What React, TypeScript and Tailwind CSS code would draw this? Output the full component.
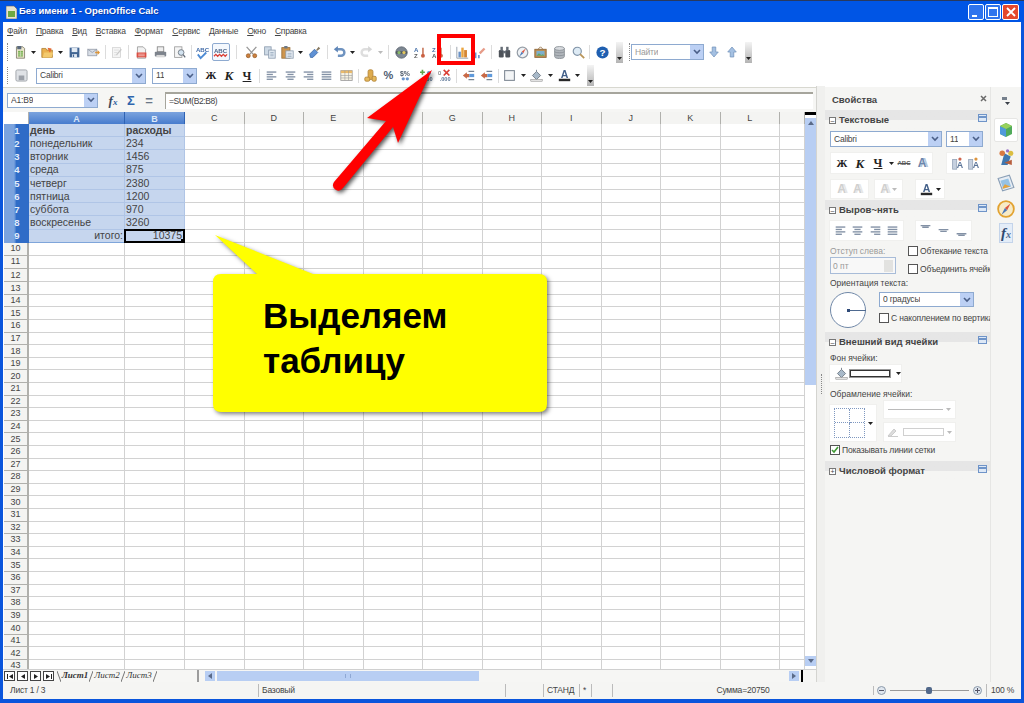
import type { ReactNode } from "react";

type Kids = { className?: string; children?: ReactNode };

const COLUMNS = ["C", "D", "E", "F", "G", "H", "I", "J", "K", "L"];
const ROW_COUNT = 43;
const TABLE = [
  ["день", "расходы"],
  ["понедельник", "234"],
  ["вторник", "1456"],
  ["среда", "875"],
  ["четверг", "2380"],
  ["пятница", "1200"],
  ["суббота", "970"],
  ["воскресенье", "3260"],
];
const MENU = [
  ["Ф", "айл"],
  ["П", "равка"],
  ["В", "ид"],
  ["В", "ставка"],
  ["Ф", "ормат"],
  ["С", "ервис"],
  ["Д", "анные"],
  ["О", "кно"],
  ["С", "правка"],
];
const GRID_COLS = "grid grid-cols-[25px_96px_60px_repeat(10,59.5px)_25px]";

function Slot({ className, children }: Kids) {
  return (
    <div className={`flex h-full shrink-0 items-center justify-center ${className ?? ""}`}>
      {children}
    </div>
  );
}

function Sep({ className }: Kids) {
  return (
    <div className={`flex h-full shrink-0 items-center justify-center ${className ?? ""}`}>
      <div className="h-[14px] w-px bg-[#dcdcdc]" />
    </div>
  );
}

function Caret({ muted }: { muted?: boolean }) {
  return (
    <svg width="5" height="3" viewBox="0 0 5 3">
      <path d="M0 0h5L2.5 3z" fill={muted ? "#bbbbbb" : "#222222"} />
    </svg>
  );
}

function Grip() {
  return (
    <div className="flex h-full w-[8px] shrink-0 justify-center py-[3px]">
      <div className="h-full w-px border-l border-dotted border-[#8a8a8a]" />
    </div>
  );
}

function ToolEnd({ className }: Kids) {
  return (
    <div
      className={`flex h-[21px] w-[7px] shrink-0 items-end justify-center bg-gradient-to-b from-[#f4f4f4] to-[#b4b4b4] pb-[3px] ${className ?? ""}`}
    >
      <Caret />
    </div>
  );
}

function Combo({ text, className, muted }: Kids & { text: string; muted?: boolean }) {
  return (
    <div
      className={`flex shrink-0 items-center justify-between border border-[#8eaad0] bg-white pl-[3px] text-[8.5px] tracking-[-0.2px] ${muted ? "text-[#9a9a9a]" : "text-[#444]"} ${className ?? ""}`}
    >
      <span className="truncate">{text}</span>
      <span className="flex h-full w-[13px] items-center justify-center bg-[#bcd0f4]">
        <svg width="8" height="6" viewBox="0 0 8 6">
          <path d="M1 1l3 3 3-3" fill="none" stroke="#4a5f88" strokeWidth="1.6" />
        </svg>
      </span>
    </div>
  );
}

function Ico({ children, size = 13 }: { children: ReactNode; size?: number }) {
  return (
    <svg width={size} height={size} viewBox="0 0 16 16" className="shrink-0 opacity-90">
      {children}
    </svg>
  );
}

const NewDoc = () => (
  <Ico>
    <path d="M3 1h8l2 2v12H3z" fill="#e9e4c8" stroke="#6d6a55" />
    <rect x="5" y="6" width="6" height="7" fill="#6ea842" />
    <path d="M5 8.5h6M5 11h6M8 6v7" stroke="#dbe8c8" strokeWidth=".7" />
    <rect x="4" y="0" width="5" height="4" fill="#4a5a70" />
  </Ico>
);
const OpenIco = () => (
  <Ico>
    <path d="M1 3h5l1 2h7v9H1z" fill="#e8a93c" stroke="#a87420" />
    <path d="M8 2l5 1-2 6z" fill="#e25a20" />
    <path d="M2 14l2-6h11l-2 6z" fill="#f2c560" />
  </Ico>
);
const SaveIco = () => (
  <Ico>
    <path d="M2 2h12v12H2z" fill="#2d5588" />
    <rect x="4.5" y="2.5" width="7" height="5" fill="#dfe8f2" />
    <rect x="5" y="10" width="6" height="4" fill="#dfe8f2" />
    <rect x="6" y="10.5" width="1.5" height="3" fill="#2d5588" />
  </Ico>
);
const MailIco = () => (
  <Ico>
    <rect x="1" y="4" width="11" height="8" fill="#d5dbe4" stroke="#8a93a2" />
    <path d="M1 4l5.5 4L12 4" fill="none" stroke="#8a93a2" />
    <path d="M10 7h3V5l3 3-3 3V9h-3z" fill="#d98a24" />
  </Ico>
);
const EditIco = () => (
  <Ico>
    <rect x="3" y="2" width="10" height="12" fill="#f4f4f4" stroke="#cfcfcf" />
    <path d="M5 5h6M5 8h4M5 11h4" stroke="#d8d8d8" />
    <path d="M8 11l6-7" stroke="#c4c4c4" strokeWidth="1.5" />
  </Ico>
);
const PdfIco = () => (
  <Ico>
    <path d="M3 1h7l3 3v11H3z" fill="#f0f0f0" stroke="#8b8b8b" />
    <rect x="2" y="8" width="12" height="6" fill="#d83b2e" />
    <path d="M4 10h8M4 12h8" stroke="#f6c4bf" />
  </Ico>
);
const PrintIco = () => (
  <Ico>
    <rect x="4" y="1" width="8" height="6" fill="#eeeeee" stroke="#747474" />
    <rect x="1" y="7" width="14" height="6" rx="1" fill="#6f7680" />
    <rect x="3" y="11" width="10" height="3" fill="#d5d5d5" />
  </Ico>
);
const PreviewIco = () => (
  <Ico>
    <rect x="2" y="1" width="9" height="13" fill="#f4f4f4" stroke="#8f8f8f" />
    <circle cx="10" cy="8" r="3.5" fill="#cfe0ef" stroke="#525c68" />
    <path d="M12.5 10.5L15 14" stroke="#525c68" strokeWidth="1.6" />
  </Ico>
);
const SpellIco = () => (
  <Ico size={15}>
    <text x="1" y="7" fontSize="6.5" fontWeight="700" fill="#2c5b9f" fontFamily="Liberation Sans">
      ABC
    </text>
    <path d="M3 10l3 4 6-6" fill="none" stroke="#3b7fd0" strokeWidth="2" />
  </Ico>
);
const AutoSpellIco = () => (
  <Ico size={15}>
    <text x="1" y="8" fontSize="6.5" fontWeight="700" fill="#39547c" fontFamily="Liberation Sans">
      ABC
    </text>
    <path d="M1 12l2-2 2 2 2-2 2 2 2-2 2 2 2-2" fill="none" stroke="#d92b20" strokeWidth="1.4" />
  </Ico>
);
const CutIco = () => (
  <Ico>
    <path d="M2 1l8 9M14 1l-8 9" stroke="#8c8c8c" strokeWidth="1.6" />
    <circle cx="4" cy="12" r="2.4" fill="#c9742a" stroke="#8f4f17" />
    <circle cx="12" cy="12" r="2.4" fill="#c9742a" stroke="#8f4f17" />
  </Ico>
);
const CopyIco = () => (
  <Ico>
    <rect x="2" y="1" width="8" height="10" fill="#c9d6e4" stroke="#7f90a5" />
    <rect x="7" y="5" width="8" height="10" fill="#dde6ef" stroke="#7f90a5" />
    <path d="M9 8h4M9 10h4M9 12h4" stroke="#8ea1b6" />
  </Ico>
);
const PasteIco = () => (
  <Ico>
    <rect x="1" y="2" width="10" height="13" fill="#c98a3a" stroke="#8b5d22" />
    <rect x="4" y="0" width="4" height="3" fill="#5e6a78" />
    <rect x="6" y="6" width="9" height="9" fill="#e6ecf3" stroke="#7f90a5" />
    <path d="M8 9h5M8 11h5M8 13h5" stroke="#8ea1b6" />
  </Ico>
);
const BrushIco = () => (
  <Ico>
    <path d="M2 10l6-6 4 4-6 6H3z" fill="#4e86d0" stroke="#2a5b9c" />
    <path d="M10 5l3-4 2 2-4 3z" fill="#7a6a4f" />
  </Ico>
);
const UndoIco = ({ flip, muted }: { flip?: boolean; muted?: boolean }) => (
  <svg
    width="13"
    height="13"
    viewBox="0 0 16 16"
    className={flip ? "-scale-x-100" : ""}
  >
    <path
      d="M5 4h5a4 4 0 0 1 0 8H6"
      fill="none"
      stroke={muted ? "#dedede" : "#6f93c0"}
      strokeWidth="3"
    />
    <path d="M6 0v8L1 4z" fill={muted ? "#d6d6d6" : "#5f86b8"} />
  </svg>
);
const NavIco = () => (
  <Ico>
    <circle cx="8" cy="8" r="7" fill="#6e7a86" stroke="#4f5862" />
    <path d="M1 8h14" stroke="#3e4650" strokeWidth="3" />
    <circle cx="5" cy="8" r="2" fill="#7fb55a" />
    <circle cx="11" cy="8" r="2" fill="#e2c34c" />
  </Ico>
);
const SortIco = ({ top, bottom }: { top: string; bottom: string }) => (
  <Ico>
    <text x="0" y="7" fontSize="7.5" fontWeight="700" fill="#2f5f9f" fontFamily="Liberation Sans">
      {top}
    </text>
    <text x="0" y="15" fontSize="7.5" fontWeight="700" fill="#4a4a4a" fontFamily="Liberation Sans">
      {bottom}
    </text>
    <path d="M11 2v8" stroke="#c26a4a" strokeWidth="2" />
    <circle cx="11" cy="12" r="2.4" fill="#c5502e" />
  </Ico>
);
const ChartIco = () => (
  <Ico>
    <path d="M1 1v14h14" fill="none" stroke="#7a8694" />
    <rect x="3" y="7" width="3" height="7" fill="#5a86c0" />
    <rect x="6.5" y="2" width="3" height="12" fill="#e89b2c" />
    <rect x="10" y="5" width="3.5" height="9" fill="#d07a1e" />
  </Ico>
);
const DrawIco = () => (
  <Ico>
    <path d="M2 15V8" stroke="#5a86c0" strokeWidth="2" />
    <path d="M6 15v-4" stroke="#5a86c0" strokeWidth="2" />
    <path d="M6 8l6-6 2 2-6 6z" fill="#e4917c" />
  </Ico>
);
const BinocIco = () => (
  <Ico>
    <rect x="1" y="5" width="6" height="9" rx="1.5" fill="#3a4048" />
    <rect x="9" y="5" width="6" height="9" rx="1.5" fill="#3a4048" />
    <rect x="3" y="1" width="3" height="5" fill="#565e68" />
    <rect x="10" y="1" width="3" height="5" fill="#565e68" />
    <rect x="6" y="6" width="4" height="3" fill="#565e68" />
  </Ico>
);
const CompassIco = () => (
  <Ico>
    <circle cx="8" cy="8" r="6.5" fill="#eef1f4" stroke="#8b949e" strokeWidth="1.5" />
    <path d="M12 3L7 7l2 2z" fill="#d8442e" />
    <path d="M4 13l3-6 2 2z" fill="#3b6cb0" />
  </Ico>
);
const GalleryIco = () => (
  <Ico>
    <rect x="1" y="4" width="14" height="10" fill="#b87f3a" stroke="#7c5220" />
    <rect x="3" y="6" width="10" height="6" fill="#6fa7c8" />
    <path d="M3 12l3-3 3 2 2-1 2 2z" fill="#5f9a42" />
    <path d="M5 4l3-3 3 3" fill="none" stroke="#7c5220" />
  </Ico>
);
const DbIco = () => (
  <Ico>
    <path d="M2 3v10c0 1.5 2.7 2.5 6 2.5s6-1 6-2.5V3z" fill="#a8aeb4" stroke="#7a8087" />
    <ellipse cx="8" cy="3" rx="6" ry="2.4" fill="#d4d8dc" stroke="#7a8087" />
    <path d="M2 7c1 1.8 11 1.8 12 0M2 10.5c1 1.8 11 1.8 12 0" fill="none" stroke="#7a8087" />
  </Ico>
);
const ZoomIco = () => (
  <Ico>
    <circle cx="6.5" cy="6.5" r="5" fill="#dbe9f5" stroke="#73889e" strokeWidth="1.4" />
    <path d="M10 10l5 5" stroke="#b28a48" strokeWidth="2.2" />
  </Ico>
);
const HelpIco = () => (
  <svg width="13" height="13" viewBox="0 0 16 16">
    <circle cx="8" cy="8" r="7.5" fill="#1f5fb0" />
    <text x="8" y="12.2" textAnchor="middle" fontSize="12" fontWeight="700" fill="#fff" fontFamily="Liberation Sans">
      ?
    </text>
  </svg>
);
const NavArrow = ({ up }: { up?: boolean }) => (
  <svg width="10" height="12" viewBox="0 0 14 16" className={up ? "" : "rotate-180"}>
    <path d="M7 1l6 7H9.5v7h-5V8H1z" fill="#a4c0e2" stroke="#6f90b8" />
  </svg>
);
const AlignIco = ({ kind }: { kind: "l" | "c" | "r" | "j" }) => {
  const short = kind === "j" ? 14 : 9;
  const x = kind === "l" || kind === "j" ? 1 : kind === "c" ? 3.5 : 6;
  return (
    <Ico size={11}>
      <path d="M1 3h14" stroke="#76869c" strokeWidth="2" />
      <path d={`M${x} 6.5h${short}`} stroke="#76869c" strokeWidth="2" />
      <path d="M1 10h14" stroke="#76869c" strokeWidth="2" />
      <path d={`M${x} 13.5h${short}`} stroke="#76869c" strokeWidth="2" />
    </Ico>
  );
};
const TableIco = () => (
  <Ico>
    <rect x="1" y="2" width="14" height="12" fill="#f6f2e2" stroke="#8d8d8d" />
    <rect x="1" y="2" width="14" height="3" fill="#e8b35c" />
    <path d="M1 8h14M1 11h14M6 2v12M10.5 2v12" stroke="#8d8d8d" strokeWidth=".7" />
  </Ico>
);
const CoinsIco = () => (
  <Ico>
    <rect x="5" y="1" width="6" height="12" rx="2" fill="#dba33a" stroke="#a87420" />
    <rect x="1" y="10" width="6" height="5" rx="1.5" fill="#e3b24c" stroke="#a87420" />
    <rect x="10" y="9" width="5" height="6" rx="1.5" fill="#e3b24c" stroke="#a87420" />
  </Ico>
);
const Glyph = ({ text, className }: { text: string; className: string }) => (
  <span className={`font-['Liberation_Serif',serif] leading-none ${className}`}>{text}</span>
);
const PercentIco = () => <span className="text-[11px] font-bold leading-none text-[#4c5b70]">%</span>;
const CurrencyIco = () => (
  <Ico>
    <text x="0" y="8" fontSize="8.5" fontWeight="700" fill="#3c4a5c" fontFamily="Liberation Sans">
      $%
    </text>
    <circle cx="4" cy="12" r="2" fill="#5b8bc8" />
    <circle cx="9" cy="12" r="2" fill="#5b8bc8" />
  </Ico>
);
const DecimalIco = ({ remove }: { remove?: boolean }) => (
  <Ico>
    {remove ? (
      <>
        <text x="0" y="7" fontSize="7" fill="#444" fontFamily="Liberation Sans">0</text>
        <path d="M7 1l7 7M14 1L7 8" stroke="#d82b20" strokeWidth="2" />
      </>
    ) : (
      <>
        <path d="M3 1v6M0 4h6" stroke="#4f9a38" strokeWidth="2" />
        <circle cx="11" cy="5" r="2.5" fill="#5b8bc8" />
      </>
    )}
    <text x="2" y="15" fontSize="7" fontWeight="700" fill="#4f6a8c" fontFamily="Liberation Sans">.000</text>
  </Ico>
);
const IndentIco = () => (
  <Ico>
    <path d="M1 8l5-4v2h3v4H6v2z" fill="#c45a34" />
    <path d="M8 3h7M8 13h7" stroke="#6a7788" strokeWidth="1.4" />
    <rect x="9" y="6" width="6" height="4" fill="#4d8fd8" />
  </Ico>
);
const BorderIco = () => (
  <Ico>
    <rect x="2" y="2" width="12" height="12" fill="#f2f4f6" stroke="#717c88" strokeWidth="1.3" />
  </Ico>
);
const BucketIco = () => (
  <Ico>
    <path d="M3 8l5-5 5 5-5 5z" fill="#9fb2c4" stroke="#55616e" />
    <path d="M8 3V1" stroke="#55616e" />
    <rect x="1" y="13" width="14" height="2" fill="#e8e8e8" stroke="#6c6c6c" strokeWidth=".6" />
  </Ico>
);
const FontColorIco = () => (
  <Ico>
    <text x="8" y="11" textAnchor="middle" fontSize="13" fontWeight="700" fill="#2e4e7c" fontFamily="Liberation Sans">
      A
    </text>
    <rect x="1" y="12" width="14" height="3" fill="#111" />
  </Ico>
);
const ShadowA = ({ muted }: { muted?: boolean }) => (
  <span
    className={
      muted
        ? "text-[12px] font-bold leading-none text-[#cfcfcf] [text-shadow:2px_0_0_#e6e6e6]"
        : "text-[12px] font-bold leading-none text-[#6a86ac] [text-shadow:2px_0_0_#b5c4d8]"
    }
  >
    A
  </span>
);
const SpacingIco = ({ tip }: { tip: string }) => (
  <Ico>
    <rect x="2" y="3" width="5" height="12" fill="#c0ccdc" stroke="#8a9ab0" />
    <text x="11" y="14" textAnchor="middle" fontSize="11" fontWeight="700" fill="#49648c" fontFamily="Liberation Sans">
      A
    </text>
    <circle cx="11" cy="2.5" r="2" fill={tip} />
  </Ico>
);
const CubeTab = () => (
  <Ico size={16}>
    <path d="M8 1l6 3v8l-6 3-6-3V4z" fill="#3fa24a" />
    <path d="M2 4l6 3v8l-6-3z" fill="#3c8fd8" />
    <path d="M8 1l6 3-6 3-6-3z" fill="#8ccd4c" />
  </Ico>
);
const StylesTab = () => (
  <Ico size={17}>
    <path d="M3 15l3-11 6 3-3 8z" fill="#2c6aa8" />
    <circle cx="4" cy="4" r="2.6" fill="#d56c2f" />
    <circle cx="12" cy="4" r="2.4" fill="#d9b92e" />
    <path d="M6 13l7 2v-5z" fill="#b14f2a" />
    <circle cx="9" cy="1.8" r="1.6" fill="#9164c2" />
  </Ico>
);
const GalleryTab = () => (
  <Ico size={18}>
    <path d="M1 4l10-3 4 11-10 3z" fill="#e6edf5" stroke="#7f96b0" />
    <path d="M3 6l7-2 2.5 7-7 2z" fill="#8cbde4" />
    <path d="M5 12l2-3 2 1 3 1-7 2z" fill="#e49b2c" />
  </Ico>
);
const CompassTab = () => (
  <Ico size={18}>
    <circle cx="8" cy="8" r="7" fill="#f8e9c2" stroke="#e09a1c" strokeWidth="1.6" />
    <path d="M12 3L7 7l2 2z" fill="#d8442e" />
    <path d="M4 13l3-6 2 2z" fill="#3b6cb0" />
  </Ico>
);

function TitleBar() {
  return (
    <div className="flex h-[22px] shrink-0 items-center border-t border-[#28395f] bg-[#0055e5] pl-[6px] pr-[5px]">
      <svg width="11" height="14" viewBox="0 0 11 14" className="mr-[2px]">
        <path d="M0 1h8l3 3v10H0z" fill="#e8e4cf" stroke="#556" strokeWidth=".6" />
        <rect x="2" y="6" width="7" height="6" fill="#6ea842" />
      </svg>
      <span className="text-[9.5px] font-bold text-white [text-shadow:1px_1px_0_#0a3aa8]">
        Без имени 1 - OpenOffice Calc
      </span>
      <div className="ml-auto flex gap-[1px]">
        <div className="flex h-[16px] w-[16px] items-end rounded-[2px] border border-white bg-[#2f74ee] pb-[2px] pl-[3px]">
          <div className="h-[2px] w-[5px] bg-white" />
        </div>
        <div className="flex h-[16px] w-[16px] items-center justify-center rounded-[2px] border border-white bg-[#2f74ee]">
          <div className="h-[10px] w-[10px] border border-t-2 border-white" />
        </div>
        <div className="flex h-[16px] w-[17px] items-center justify-center rounded-[2px] border border-white bg-[#e5482c]">
          <svg width="10" height="10" viewBox="0 0 10 10">
            <path d="M1 1l8 8M9 1L1 9" stroke="#fff" strokeWidth="1.8" />
          </svg>
        </div>
      </div>
    </div>
  );
}

function MenuBar() {
  return (
    <div className="flex h-[18px] shrink-0 items-center gap-[9px] bg-white pl-[4px] text-[8.5px] text-[#444]">
      {MENU.map(([first, rest], index) => (
        <span key={index} className="tracking-[-0.25px]">
          <span className="underline">{first}</span>
          {rest}
        </span>
      ))}
    </div>
  );
}

function MainToolbar() {
  return (
    <div className="flex h-[24px] shrink-0 items-center bg-white">
      <Grip />
      <Slot className="w-[18px]"><NewDoc /></Slot>
      <Slot className="w-[9px]"><Caret /></Slot>
      <Slot className="w-[18px]"><OpenIco /></Slot>
      <Slot className="w-[9px]"><Caret /></Slot>
      <Slot className="w-[18px]"><SaveIco /></Slot>
      <Slot className="w-[20px]"><MailIco /></Slot>
      <Sep className="w-[5px]" />
      <Slot className="w-[17px]"><EditIco /></Slot>
      <Sep className="w-[7px]" />
      <Slot className="w-[19px]"><PdfIco /></Slot>
      <Slot className="w-[18px]"><PrintIco /></Slot>
      <Slot className="w-[20px]"><PreviewIco /></Slot>
      <Sep className="w-[5px]" />
      <Slot className="w-[17px]"><SpellIco /></Slot>
      <Slot className="w-[19px]">
        <div className="flex h-[18px] w-[18px] items-center justify-center rounded-[2px] border border-[#8eaad0] bg-[#f4f8fd]">
          <AutoSpellIco />
        </div>
      </Slot>
      <Sep className="w-[13px]" />
      <Slot className="w-[16px]"><CutIco /></Slot>
      <Slot className="w-[20px]"><CopyIco /></Slot>
      <Slot className="w-[17px]"><PasteIco /></Slot>
      <Slot className="w-[9px]"><Caret /></Slot>
      <Slot className="w-[18px]"><BrushIco /></Slot>
      <Sep className="w-[9px]" />
      <Slot className="w-[14px]"><UndoIco /></Slot>
      <Slot className="w-[12px]"><Caret /></Slot>
      <Slot className="w-[16px]"><UndoIco flip muted /></Slot>
      <Slot className="w-[12px]"><Caret muted /></Slot>
      <Sep className="w-[5px]" />
      <Slot className="w-[20px]"><NavIco /></Slot>
      <Slot className="w-[18px]"><SortIco top="A" bottom="Z" /></Slot>
      <Slot className="w-[18px]"><SortIco top="Z" bottom="A" /></Slot>
      <Sep className="w-[6px]" />
      <Slot className="w-[18px]"><ChartIco /></Slot>
      <Slot className="w-[19px]"><DrawIco /></Slot>
      <Sep className="w-[3px]" />
      <Slot className="w-[22px]"><BinocIco /></Slot>
      <Slot className="w-[15px]"><CompassIco /></Slot>
      <Slot className="w-[20px]"><GalleryIco /></Slot>
      <Slot className="w-[18px]"><DbIco /></Slot>
      <Slot className="w-[20px]"><ZoomIco /></Slot>
      <Sep className="w-[3px]" />
      <Slot className="w-[22px]"><HelpIco /></Slot>
      <ToolEnd className="ml-[3px]" />
      <div className="ml-[3px] flex h-full w-[7px] shrink-0 justify-center py-[3px]">
        <div className="h-full border-l border-dotted border-[#8a8a8a]" />
      </div>
      <Combo text="Найти" muted className="ml-[-2px] h-[16px] w-[73px]" />
      <Slot className="ml-[1px] w-[18px]"><NavArrow /></Slot>
      <Slot className="w-[18px]"><NavArrow up /></Slot>
      <ToolEnd className="ml-[4px]" />
    </div>
  );
}

function FormatToolbar() {
  return (
    <div className="flex h-[23px] shrink-0 items-center bg-white">
      <Grip />
      <Slot className="w-[20px]">
        <svg width="13" height="13" viewBox="0 0 14 14">
          <rect x="1" y="1" width="12" height="12" rx="1.5" fill="#dfe2e6" stroke="#a0a4aa" />
          <rect x="4" y="7" width="6" height="5" fill="#9ba0a8" />
        </svg>
      </Slot>
      <Combo text="Calibri" className="ml-[5px] h-[16px] w-[110px]" />
      <Combo text="11" className="ml-[6px] h-[16px] w-[45px]" />
      <Slot className="ml-[5px] w-[18px]"><Glyph text="Ж" className="text-[11px] font-bold text-[#222]" /></Slot>
      <Slot className="w-[18px]"><Glyph text="К" className="text-[13px] font-bold italic text-[#222]" /></Slot>
      <Slot className="w-[18px]"><Glyph text="Ч" className="text-[12px] font-bold text-[#222] underline" /></Slot>
      <Sep className="w-[6px]" />
      <Slot className="w-[19px]"><AlignIco kind="l" /></Slot>
      <Slot className="w-[18px]"><AlignIco kind="c" /></Slot>
      <Slot className="w-[18px]"><AlignIco kind="r" /></Slot>
      <Slot className="w-[19px]"><AlignIco kind="j" /></Slot>
      <Slot className="w-[20px]"><TableIco /></Slot>
      <Sep className="w-[4px]" />
      <Slot className="w-[20px]"><CoinsIco /></Slot>
      <Slot className="w-[17px]"><PercentIco /></Slot>
      <Slot className="w-[19px]"><CurrencyIco /></Slot>
      <Slot className="w-[20px]"><DecimalIco /></Slot>
      <Slot className="w-[16px]"><DecimalIco remove /></Slot>
      <Sep className="w-[8px]" />
      <Slot className="w-[17px]"><IndentIco /></Slot>
      <Slot className="w-[19px]"><IndentIco /></Slot>
      <Sep className="w-[4px]" />
      <Slot className="w-[19px]"><BorderIco /></Slot>
      <Slot className="w-[8px]"><Caret /></Slot>
      <Slot className="w-[19px]"><BucketIco /></Slot>
      <Slot className="w-[9px]"><Caret /></Slot>
      <Slot className="w-[18px]"><FontColorIco /></Slot>
      <Slot className="w-[9px]"><Caret /></Slot>
      <ToolEnd className="ml-[5px]" />
    </div>
  );
}

function FormulaBar() {
  return (
    <div className="flex h-[25px] shrink-0 items-center border-t border-[#d8d8d0] bg-[#f6f6f4] pl-[4px]">
      <Combo text="A1:B9" className="h-[15px] w-[91px]" />
      <Slot className="ml-[6px] w-[18px]">
        <span className="font-['Liberation_Serif',serif] text-[13px] font-bold italic leading-none text-[#3a4a60]">
          f<span className="text-[9px] text-[#2f5f9f]">x</span>
        </span>
      </Slot>
      <Slot className="w-[18px]">
        <span className="text-[13px] font-bold leading-none text-[#2f65ad]">Σ</span>
      </Slot>
      <Slot className="w-[18px]">
        <span className="text-[13px] font-bold leading-none text-[#6a7788]">=</span>
      </Slot>
      <div className="ml-[7px] flex h-[17px] flex-1 items-center border-t-2 border-l border-t-[#a6a59c] border-l-[#a6a59c] bg-white pl-[3px] text-[8.5px] tracking-[-0.4px] text-[#444]">
        =SUM(B2:B8)
      </div>
      <div className="w-[3px]" />
    </div>
  );
}

function HeaderCell({ label, selected }: { label: string; selected?: boolean }) {
  return (
    <div
      className={
        selected
          ? "flex items-center justify-center border-r border-[#2f63b4] bg-gradient-to-b from-[#7ba3de] to-[#3a72c9] text-[9px] font-bold text-[#dce8f8]"
          : "flex items-center justify-center border-r border-b border-[#b0b0ac] bg-[#f4f4f2] text-[9px] text-[#444]"
      }
    >
      {label}
    </div>
  );
}

function DataCell({ row, col }: { row: number; col: number }) {
  const inTable = row <= 9 && col <= 1;
  const value = row <= 8 && col <= 1 ? TABLE[row - 1][col] : "";
  const isHead = row === 1;
  if (inTable) {
    const isTotal = row === 9;
    return (
      <div
        className={`relative flex items-center bg-[#c6d6ee] px-[1px] text-[10.5px] leading-none text-[#444] ${
          row === 9 ? "border-b border-[#6a97d8]" : "border-b border-[#b0c5e6]"
        } ${col === 0 ? "border-r border-[#7fa5da]" : "border-r border-[#6a97d8]"} ${isHead ? "font-bold" : ""} ${isTotal ? "justify-end" : ""}`}
      >
        {isTotal && col === 0 ? "итого:" : value}
        {isTotal && col === 1 && (
          <div className="absolute -inset-[1px] flex items-center justify-end border-2 border-black pr-[1px]">
            10375
            <div className="absolute -right-[2px] -bottom-[2px] h-[4px] w-[4px] bg-black" />
          </div>
        )}
      </div>
    );
  }
  return <div className="border-r border-b border-[#d2d2d2] bg-white" />;
}

function Sheet() {
  const rows = Array.from({ length: ROW_COUNT }, (_, index) => index + 1);
  const cols = Array.from({ length: 13 }, (_, index) => index);
  return (
    <div className="flex min-h-0 flex-1 overflow-hidden">
      <div className="ml-[1px] flex-1 overflow-hidden">
        <div className={`${GRID_COLS} h-[12px]`}>
          <div className="border-r border-b border-[#b0b0ac] bg-white" />
          <HeaderCell label="A" selected />
          <HeaderCell label="B" selected />
          {COLUMNS.map((name) => (
            <HeaderCell key={name} label={name} />
          ))}
          <HeaderCell label="" />
        </div>
        {rows.map((row) => (
          <div
            key={row}
            className={`${GRID_COLS} ${row <= 12 ? "h-[13.2px]" : "h-[12.6px]"}`}
          >
            <div
              className={
                row <= 9
                  ? "flex items-center justify-center bg-gradient-to-r from-[#7ba3de] from-40% to-[#2f6cc7] to-50% pl-[1px] text-[9.5px] font-bold leading-none text-[#e4edfa]"
                  : "flex items-center justify-center border-r-2 border-b border-[#b0b0ac] bg-[#f4f4f2] text-[9px] leading-none text-[#444]"
              }
            >
              {row}
            </div>
            {cols.map((col) => (
              <DataCell key={col} row={row} col={col} />
            ))}
          </div>
        ))}
      </div>
      <div className="flex w-[11px] shrink-0 flex-col bg-white">
        <div className="h-[3px] bg-black" />
        <div className="mt-[3px] flex h-[10px] items-center justify-center bg-[#b8cef3]">
          <svg width="6" height="4" viewBox="0 0 6 4"><path d="M0 4h6L3 0z" fill="#5a6a88" /></svg>
        </div>
        <div className="h-[257px] bg-[#b8cef3]" />
        <div className="flex-1" />
        <div className="mb-[3px] flex h-[10px] items-center justify-center bg-[#b8cef3]">
          <svg width="6" height="4" viewBox="0 0 6 4"><path d="M0 0h6L3 4z" fill="#5a6a88" /></svg>
        </div>
      </div>
    </div>
  );
}

function NavBtn({ children }: Kids) {
  return (
    <div className="flex h-[10px] w-[11px] shrink-0 items-center justify-center border border-[#444] bg-white">
      {children}
    </div>
  );
}

function TabEdge({ back }: { back?: boolean }) {
  return (
    <svg width="4" height="11" viewBox="0 0 4 11" className="shrink-0">
      <path d={back ? "M0 0l4 11" : "M0 11l4-11"} stroke="#777" fill="none" />
    </svg>
  );
}

function SheetTabs() {
  return (
    <div className="flex h-[13px] shrink-0 items-center border-t border-[#d0d0d0] bg-[#f6f6f4] pl-[1px]">
      <div className="flex w-[52px] shrink-0 gap-[2px]">
        <NavBtn><svg width="6" height="5" viewBox="0 0 6 5"><path d="M0 0h1v5H0zM6 0v5L2 2.5z" fill="#222" /></svg></NavBtn>
        <NavBtn><svg width="4" height="5" viewBox="0 0 4 5"><path d="M4 0v5L0 2.5z" fill="#222" /></svg></NavBtn>
        <NavBtn><svg width="4" height="5" viewBox="0 0 4 5"><path d="M0 0v5l4-2.5z" fill="#222" /></svg></NavBtn>
        <NavBtn><svg width="6" height="5" viewBox="0 0 6 5"><path d="M5 0h1v5H5zM0 0v5l4-2.5z" fill="#222" /></svg></NavBtn>
      </div>
      <div className="flex h-full w-[143px] shrink-0 items-center border-r-2 border-[#9c9c9c] pl-[1px] font-['Liberation_Serif',serif] text-[9px] italic text-[#333]">
        <TabEdge back />
        <span className="w-[28px] shrink-0 border-b border-[#666] text-center font-bold">Лист1</span>
        <TabEdge />
        <span className="w-[28px] shrink-0 border-b border-[#999] text-center">Лист2</span>
        <TabEdge />
        <span className="w-[28px] shrink-0 border-b border-[#999] text-center">Лист3</span>
        <TabEdge />
      </div>
      <div className="ml-[6px] flex h-[10px] w-[10px] shrink-0 items-center justify-center bg-[#b8cef3]">
        <svg width="4" height="6" viewBox="0 0 4 6"><path d="M4 0v6L0 3z" fill="#5a6a88" /></svg>
      </div>
      <div className="ml-[2px] flex h-[10px] w-[262px] shrink-0 items-center justify-center bg-[#b8cef3]">
        <div className="h-[4px] w-[6px] border-x border-[#8fa8d4]" />
      </div>
      <div className="flex-1" />
      <div className="flex h-[10px] w-[10px] shrink-0 items-center justify-center bg-[#b8cef3]">
        <svg width="4" height="6" viewBox="0 0 4 6"><path d="M0 0v6l4-3z" fill="#5a6a88" /></svg>
      </div>
      <div className="ml-[2px] mr-[13px] h-[12px] w-[2px] bg-black" />
    </div>
  );
}

function Section({ title, plus }: { title: string; plus?: boolean }) {
  return (
    <div className="flex h-[20px] shrink-0 items-center bg-gradient-to-b from-[#e6e6e6] from-50% to-[#f5f5f3] to-50% pl-[4px] pr-[3px] text-[9.5px] font-bold text-[#444]">
      <span className="mr-[3px] flex h-[7px] w-[7px] items-center justify-center border border-[#777] bg-white text-[7px] font-normal leading-none">
        {plus ? "+" : "–"}
      </span>
      <span>{title}</span>
      <span className="mb-[4px] ml-auto flex h-[8px] w-[9px] items-start border border-[#6f94c8] bg-[#dde8f6]">
        <span className="mt-[1px] h-[2px] w-full bg-[#6f94c8]" />
      </span>
    </div>
  );
}

function Group({ className, children }: Kids) {
  return (
    <div className={`flex shrink-0 items-center border border-[#f0f0ee] bg-white ${className ?? ""}`}>
      {children}
    </div>
  );
}

function CheckRow({ text, checked, className }: Kids & { text: string; checked?: boolean }) {
  return (
    <div className={`flex items-center overflow-hidden whitespace-nowrap text-[8.5px] tracking-[-0.15px] text-[#444] ${className ?? ""}`}>
      <span className="mr-[2px] flex h-[10px] w-[10px] shrink-0 items-center justify-center border border-[#555] bg-white">
        {checked && (
          <svg width="8" height="8" viewBox="0 0 8 8">
            <path d="M1 4l2 2 4-5" fill="none" stroke="#3f9a34" strokeWidth="1.6" />
          </svg>
        )}
      </span>
      {text}
    </div>
  );
}

function VAlignIco({ pos }: { pos: number }) {
  const y = [2, 7, 12][pos];
  return (
    <Ico size={13}>
      <path d={`M2 ${y}h12M4 ${y + 2}h8`} stroke="#76869c" strokeWidth="1.6" />
    </Ico>
  );
}

function SidebarPanel() {
  return (
    <div className="flex w-[166px] shrink-0 flex-col overflow-hidden border-r border-[#e6e6e4] bg-[#f5f5f3] pt-[3px]">
      <div className="flex h-[20px] shrink-0 items-center justify-between pl-[7px] pr-[3px] text-[9.5px] font-bold text-[#444]">
        Свойства
        <svg width="7" height="7" viewBox="0 0 7 7" className="mb-[4px]">
          <path d="M1 1l5 5M6 1L1 6" stroke="#6a6a6a" strokeWidth="1.5" />
        </svg>
      </div>
      <Section title="Текстовые" />
      <div className="mt-[1px] flex shrink-0 px-[5px]">
        <Combo text="Calibri" className="h-[16px] w-[112px]" />
        <Combo text="11" className="ml-[4px] h-[16px] w-[37px]" />
      </div>
      <div className="mt-[5px] flex h-[22px] shrink-0 px-[5px]">
        <Group className="h-full w-[103px] pl-[2px]">
          <Slot className="w-[18px]"><Glyph text="Ж" className="text-[11px] font-bold text-[#222]" /></Slot>
          <Slot className="w-[18px]"><Glyph text="К" className="text-[13px] font-bold italic text-[#222]" /></Slot>
          <Slot className="w-[18px]"><Glyph text="Ч" className="text-[12px] font-bold text-[#222] underline" /></Slot>
          <Slot className="w-[8px]"><Caret /></Slot>
          <Slot className="w-[18px]"><span className="text-[6px] font-bold text-[#555] line-through">ABC</span></Slot>
          <Slot className="w-[18px]"><ShadowA /></Slot>
        </Group>
        <Group className="ml-[13px] h-full w-[39px] justify-center gap-[3px]">
          <SpacingIco tip="#c9553a" />
          <SpacingIco tip="#d98a2c" />
        </Group>
      </div>
      <div className="mt-[5px] flex h-[20px] shrink-0 px-[5px]">
        <Group className="h-full w-[39px] justify-center gap-[7px]">
          <ShadowA muted />
          <ShadowA muted />
        </Group>
        <Group className="ml-[5px] h-full w-[29px] justify-center gap-[3px]">
          <ShadowA muted />
          <Caret muted />
        </Group>
        <Group className="ml-[12px] h-full w-[30px] justify-center gap-[3px]">
          <FontColorIco />
          <Caret />
        </Group>
      </div>
      <div className="mt-[1px]">
        <Section title="Выров~нять" />
      </div>
      <div className="flex h-[21px] shrink-0 pl-[4px]">
        <Group className="h-full w-[75px] justify-around px-[2px]">
          <AlignIco kind="l" />
          <AlignIco kind="c" />
          <AlignIco kind="r" />
          <AlignIco kind="j" />
        </Group>
        <Group className="ml-[11px] h-full w-[57px] justify-around">
          <VAlignIco pos={0} />
          <VAlignIco pos={1} />
          <VAlignIco pos={2} />
        </Group>
      </div>
      <div className="mt-[5px] flex h-[28px] shrink-0 pl-[5px]">
        <div className="w-[78px] shrink-0 text-[8.5px] leading-[10px] text-[#9a9a9a]">
          Отступ слева:
          <div className="mt-[1px] flex h-[17px] w-[66px] items-center justify-between border border-[#a8bcd8] bg-[#f8f8f8] pl-[2px] pr-[2px]">
            0 пт
            <span className="h-[12px] w-[9px] bg-[#e2e2e0]" />
          </div>
        </div>
        <div className="flex min-w-0 flex-1 flex-col gap-[8px]">
          <CheckRow text="Обтекание текста" />
          <CheckRow text="Объединить ячейки" />
        </div>
      </div>
      <div className="mt-[4px] h-[10px] shrink-0 pl-[5px] text-[8.5px] leading-[10px] text-[#444]">
        Ориентация текста:
      </div>
      <div className="mt-[4px] flex h-[36px] shrink-0 pl-[5px]">
        <div className="relative h-[36px] w-[36px] shrink-0 rounded-full border border-[#7088a8] bg-white">
          <div className="absolute left-[17px] top-[17px] h-px w-[18px] bg-[#4f6a90]" />
          <div className="absolute left-[16px] top-[16px] h-[3px] w-[3px] bg-[#2f4a78]" />
        </div>
        <div className="ml-[13px] flex min-w-0 flex-1 flex-col">
          <Combo text="0 градусы" className="h-[15px] w-[95px]" />
          <CheckRow text="С накоплением по вертикали" className="mt-[5px]" />
        </div>
      </div>
      <div className="mt-[4px]">
        <Section title="Внешний вид ячейки" />
      </div>
      <div className="mt-[1px] h-[10px] shrink-0 pl-[5px] text-[8.5px] leading-[10px] text-[#444]">
        Фон ячейки:
      </div>
      <Group className="ml-[4px] mt-[1px] h-[19px] w-[73px] gap-[2px] pl-[5px]">
        <BucketIco />
        <div className="h-[7px] w-[40px] border border-[#333] bg-white outline outline-1 outline-[#999]" />
        <div className="ml-[4px]"><Caret /></div>
      </Group>
      <div className="mt-[6px] h-[10px] shrink-0 pl-[5px] text-[8.5px] leading-[10px] text-[#444]">
        Обрамление ячейки:
      </div>
      <div className="mt-[1px] flex h-[42px] shrink-0 pl-[4px]">
        <Group className="mt-[4px] h-[38px] w-[48px] pl-[4px]">
          <div className="grid h-[30px] w-[31px] grid-cols-2 grid-rows-2 border border-dotted border-[#7f98c0]">
            <div className="border-r border-b border-dotted border-[#7f98c0]" />
            <div className="border-b border-dotted border-[#7f98c0]" />
            <div className="border-r border-dotted border-[#7f98c0]" />
            <div />
          </div>
          <div className="ml-[3px]"><Caret /></div>
        </Group>
        <div className="ml-[6px] flex w-[73px] flex-col gap-[3px]">
          <Group className="h-[19px] justify-between px-[4px]">
            <div className="h-px w-[55px] bg-[#bbb]" />
            <Caret muted />
          </Group>
          <Group className="h-[20px] justify-between px-[3px]">
            <svg width="12" height="10" viewBox="0 0 12 10"><path d="M1 9l6-7 2 2-5 5zM1 9.5h10" stroke="#ccc" fill="#ddd" /></svg>
            <div className="h-[8px] w-[41px] border border-[#d0d0d0]" />
            <Caret muted />
          </Group>
        </div>
      </div>
      <CheckRow text="Показывать линии сетки" checked className="mt-[3px] h-[10px] shrink-0 pl-[5px]" />
      <div className="mt-[6px]">
        <Section title="Числовой формат" plus />
      </div>
    </div>
  );
}

function DeckTabs() {
  return (
    <div className="flex w-[30px] shrink-0 flex-col items-center bg-[#f5f5f3] pt-[10px]">
      <svg width="8" height="8" viewBox="0 0 8 8" className="mb-[13px] mr-[1px]">
        <rect x="0" y="0" width="5" height="3" fill="#76808c" />
        <path d="M3 5h5L5.5 8z" fill="#3a4048" />
      </svg>
      <div className="flex h-[24px] w-[24px] items-center justify-center rounded-[2px] border border-[#e6e6e4] bg-white">
        <CubeTab />
      </div>
      <div className="mt-[5px] flex h-[20px] items-center"><StylesTab /></div>
      <div className="mt-[6px] flex h-[20px] items-center"><GalleryTab /></div>
      <div className="mt-[6px] flex h-[20px] items-center"><CompassTab /></div>
      <div className="mt-[4px] flex h-[20px] items-center border border-[#c4d4ea] bg-[#e4edf8] px-[1px]">
        <span className="font-['Liberation_Serif',serif] text-[15px] font-bold italic leading-none text-[#2f4a70]">
          f<span className="text-[10px] text-[#4f6a90]">x</span>
        </span>
      </div>
    </div>
  );
}

function StatusBar() {
  return (
    <div className="flex h-[17px] shrink-0 items-center bg-[#f5f5f3] text-[8.5px] tracking-[-0.2px] text-[#444]">
      <div className="w-[255px] shrink-0 pl-[7px]">Лист 1 / 3</div>
      <div className="w-[247px] shrink-0 border-l border-[#bbb] pl-[3px]">Базовый</div>
      <div className="h-[13px] w-[38px] shrink-0 border-l border-[#bbb]" />
      <div className="w-[36px] shrink-0 border-l border-[#bbb] pl-[3px]">СТАНД</div>
      <div className="w-[12px] shrink-0 border-l border-[#bbb] pl-[3px]">*</div>
      <div className="h-[13px] w-[21px] shrink-0 border-l border-[#bbb]" />
      <div className="w-[261px] shrink-0 border-l border-[#bbb] text-center">Сумма=20750</div>
      <div className="flex w-[113px] shrink-0 items-center border-l border-[#bbb] pl-[3px]">
        <span className="flex h-[9px] w-[9px] items-center justify-center rounded-full border border-[#8c9aaa] bg-[#dfe6ee]">
          <span className="h-px w-[5px] bg-[#556]" />
        </span>
        <div className="relative mx-[4px] h-px w-[79px] bg-[#999]">
          <div className="absolute left-[36px] -top-[3px] h-[7px] w-[6px] rounded-[2px] bg-[#51688a]" />
        </div>
        <span className="relative flex h-[9px] w-[9px] items-center justify-center rounded-full border border-[#8c9aaa] bg-[#dfe6ee]">
          <span className="h-px w-[5px] bg-[#556]" />
          <span className="absolute h-[5px] w-px bg-[#556]" />
        </span>
      </div>
      <div className="flex-1 border-l border-[#bbb] pl-[4px]">100 %</div>
    </div>
  );
}

function Annotations() {
  return (
    <>
      <div className="absolute left-[437px] top-[34px] h-[31px] w-[38px] border-[4px] border-[#ff0000]" />
      <svg
        width="120"
        height="135"
        viewBox="325 65 120 135"
        className="absolute left-[325px] top-[65px] drop-shadow-[2px_2px_2px_rgba(0,0,0,0.65)]"
      >
        <path
          d="M432 70L367 118L386 121L334 182Q331 187 336 190Q340 192 343 188L393 127L398 143Z"
          fill="#ff0000"
        />
      </svg>
      <svg
        width="345"
        height="185"
        viewBox="210 232 345 185"
        className="absolute left-[210px] top-[232px] drop-shadow-[2px_2px_2px_rgba(0,0,0,0.5)]"
      >
        <path
          d="M215 235L313 274H539Q547 274 547 282V404Q547 412 539 412H221Q213 412 213 404V282Q213 274 221 274H257Z"
          fill="#ffff00"
        />
      </svg>
      <div className="absolute left-[263px] top-[293px] font-['Liberation_Sans',sans-serif] text-[35px] font-bold leading-[45px] text-black">
        Выделяем
        <br />
        таблицу
      </div>
    </>
  );
}

export default function App() {
  return (
    <div className="relative flex h-[703px] w-[1024px] flex-col overflow-hidden bg-[#0a55dc] font-['Liberation_Sans',sans-serif]">
      <TitleBar />
      <div className="mx-[3px] mb-[4px] flex min-h-0 flex-1 flex-col bg-white">
        <MenuBar />
        <MainToolbar />
        <FormatToolbar />
        <div className="flex min-h-0 flex-1">
          <div className="flex w-[813px] shrink-0 flex-col">
            <FormulaBar />
            <Sheet />
            <SheetTabs />
          </div>
          <div className="mt-[-1px] flex w-[9px] shrink-0 items-center justify-center border-l border-[#d4d4d0] bg-[#f0f0ee]">
            <div className="h-[20px] border-l border-dotted border-[#888]" />
          </div>
          <SidebarPanel />
          <DeckTabs />
        </div>
        <StatusBar />
      </div>
      <Annotations />
    </div>
  );
}
